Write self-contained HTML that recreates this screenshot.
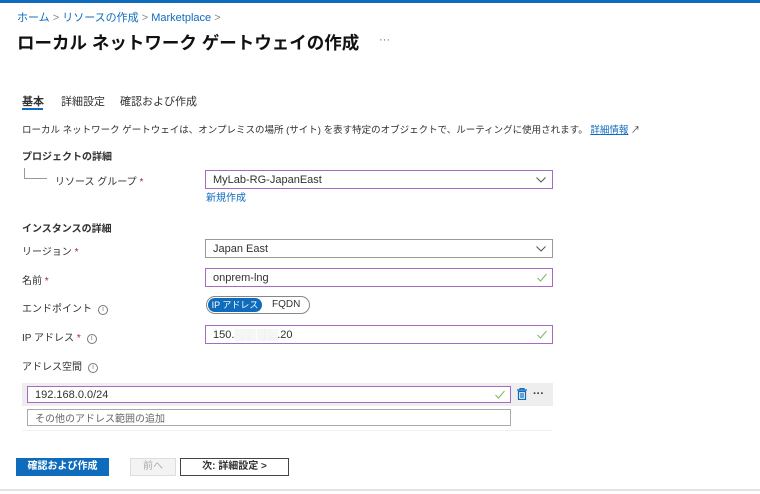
<!DOCTYPE html><html><head><meta charset="utf-8"><style>
body{margin:0;width:760px;height:494px;background:#fff;font-family:"Liberation Sans","Noto Sans CJK JP",sans-serif;color:#323130;position:relative;overflow:hidden}
.a{position:absolute;white-space:nowrap}
.s{font-size:11px}
.box{position:absolute;border:1px solid #a56bc4;background:#fff;font-size:11px;box-sizing:border-box;padding-left:7px;display:flex;align-items:center;white-space:nowrap}
.chev{position:absolute;right:6px;top:6px}
.ck{position:absolute;right:5px;top:4px}
.req{color:#a4262c}
.i{display:inline-block;width:8px;height:8px;border:1px solid #777;border-radius:50%;font-size:7px;line-height:8px;text-align:center;color:#777;margin-left:6px;vertical-align:1px}
</style></head><body>
<div class="a" style="left:0;top:0;width:760px;height:3px;background:#0f6cbd"></div>
<div class="a" style="left:17px;top:9px;font-size:11px;color:#0f6cbd">ホーム <span style="color:#888">&gt;</span> リソースの作成 <span style="color:#888">&gt;</span> Marketplace <span style="color:#888">&gt;</span></div>
<div class="a" style="left:17px;top:30px;font-size:17.5px;font-weight:bold;color:#111">ローカル ネットワーク ゲートウェイの作成</div>
<div class="a" style="left:379px;top:34px;font-size:11px;color:#666">···</div>
<div class="a s" style="left:22px;top:93px;font-weight:bold">基本</div>
<div class="a" style="left:22px;top:108px;width:21px;height:2px;background:#0f6cbd"></div>
<div class="a s" style="left:61px;top:93px">詳細設定</div>
<div class="a s" style="left:120px;top:93px">確認および作成</div>
<div class="a" style="left:22px;top:122px;font-size:9.5px">ローカル ネットワーク ゲートウェイは、オンプレミスの場所 (サイト) を表す特定のオブジェクトで、ルーティングに使用されます。 <span style="color:#0f6cbd;text-decoration:underline">詳細情報</span> <span style="font-size:9px">↗</span></div>
<div class="a" style="left:22px;top:148px;font-size:10px;font-weight:bold">プロジェクトの詳細</div>
<div class="a" style="left:24px;top:168px;width:22px;height:10px;border-left:1px solid #999;border-bottom:1px solid #999"></div>
<div class="a" style="left:55px;top:173px;font-size:10px">リソース グループ <span class="req">*</span></div>
<div class="box" style="left:205px;top:170px;width:348px;height:19px">MyLab-RG-JapanEast<svg class="chev" width="10" height="6"><path d="M0.5 0.5L5 5L9.5 0.5" fill="none" stroke="#555"/></svg></div>
<div class="a" style="left:206px;top:189px;font-size:10px;color:#0f6cbd">新規作成</div>
<div class="a" style="left:22px;top:220px;font-size:10px;font-weight:bold">インスタンスの詳細</div>
<div class="a" style="left:22px;top:243px;font-size:10px">リージョン <span class="req">*</span></div>
<div class="box" style="left:205px;top:239px;width:348px;height:19px;border-color:#999">Japan East<svg class="chev" width="10" height="6"><path d="M0.5 0.5L5 5L9.5 0.5" fill="none" stroke="#555"/></svg></div>
<div class="a" style="left:22px;top:272px;font-size:10px">名前 <span class="req">*</span></div>
<div class="box" style="left:205px;top:268px;width:348px;height:19px">onprem-lng<svg class="ck" width="10" height="9"><path d="M0.5 5L3.5 8L9.5 1" fill="none" stroke="#7cb46a"/></svg></div>
<div class="a" style="left:22px;top:300px;font-size:10px">エンドポイント<span class="i">i</span></div>
<div class="a" style="left:206px;top:296px;width:104px;height:18px;border:1px solid #888;border-radius:10px;box-sizing:border-box"></div>
<div class="a" style="left:208px;top:298px;width:54px;height:14px;background:#0f6cbd;border-radius:8px;color:#fff;font-size:9px;line-height:14px;text-align:center">IP アドレス</div>
<div class="a" style="left:272px;top:299px;font-size:10px">FQDN</div>
<div class="a" style="left:22px;top:329px;font-size:10px">IP アドレス <span class="req">*</span><span class="i">i</span></div>
<div class="box" style="left:205px;top:325px;width:348px;height:19px">150.<span style="color:#ddd;letter-spacing:-1px">▒▒▒ ▒▒▒</span>.20<svg class="ck" width="10" height="9"><path d="M0.5 5L3.5 8L9.5 1" fill="none" stroke="#7cb46a"/></svg></div>
<div class="a" style="left:22px;top:358px;font-size:10px">アドレス空間<span class="i">i</span></div>
<div class="a" style="left:22px;top:383px;width:531px;height:23px;background:#eee"></div>
<div class="box" style="left:27px;top:386px;width:484px;height:17px">192.168.0.0/24<svg class="ck" style="top:3px" width="10" height="9"><path d="M0.5 5L3.5 8L9.5 1" fill="none" stroke="#7cb46a"/></svg></div>
<svg class="a" style="left:517px;top:388px" width="10" height="12"><path d="M0 2H10M3 2V0.5H7V2M1.5 3.5H8.5V11.5H1.5Z M4 5V10M6 5V10" fill="none" stroke="#0f6cbd" stroke-width="1.2"/></svg>
<div class="a" style="left:533px;top:389px;font-size:11px;font-weight:bold;line-height:10px">···</div>
<div class="box" style="left:27px;top:409px;width:484px;height:17px;border-color:#aaa;color:#666;font-size:10px">その他のアドレス範囲の追加</div>
<div class="a" style="left:22px;top:430px;width:531px;height:1px;background:#f2f2f2"></div>
<div class="a" style="left:16px;top:458px;width:93px;height:18px;background:#0f6cbd;color:#fff;font-size:10px;font-weight:bold;text-align:center;line-height:18px">確認および作成</div>
<div class="a" style="left:130px;top:458px;width:46px;height:18px;background:#f3f3f3;border:1px solid #ddd;box-sizing:border-box;color:#aaa;font-size:10px;text-align:center;line-height:16px">前へ</div>
<div class="a" style="left:180px;top:458px;width:109px;height:18px;border:1px solid #444;box-sizing:border-box;font-size:10px;font-weight:bold;text-align:center;line-height:16px">次: 詳細設定 &gt;</div>
<div class="a" style="left:0;top:489px;width:760px;height:2px;background:#e3e3e3"></div>
</body></html>
